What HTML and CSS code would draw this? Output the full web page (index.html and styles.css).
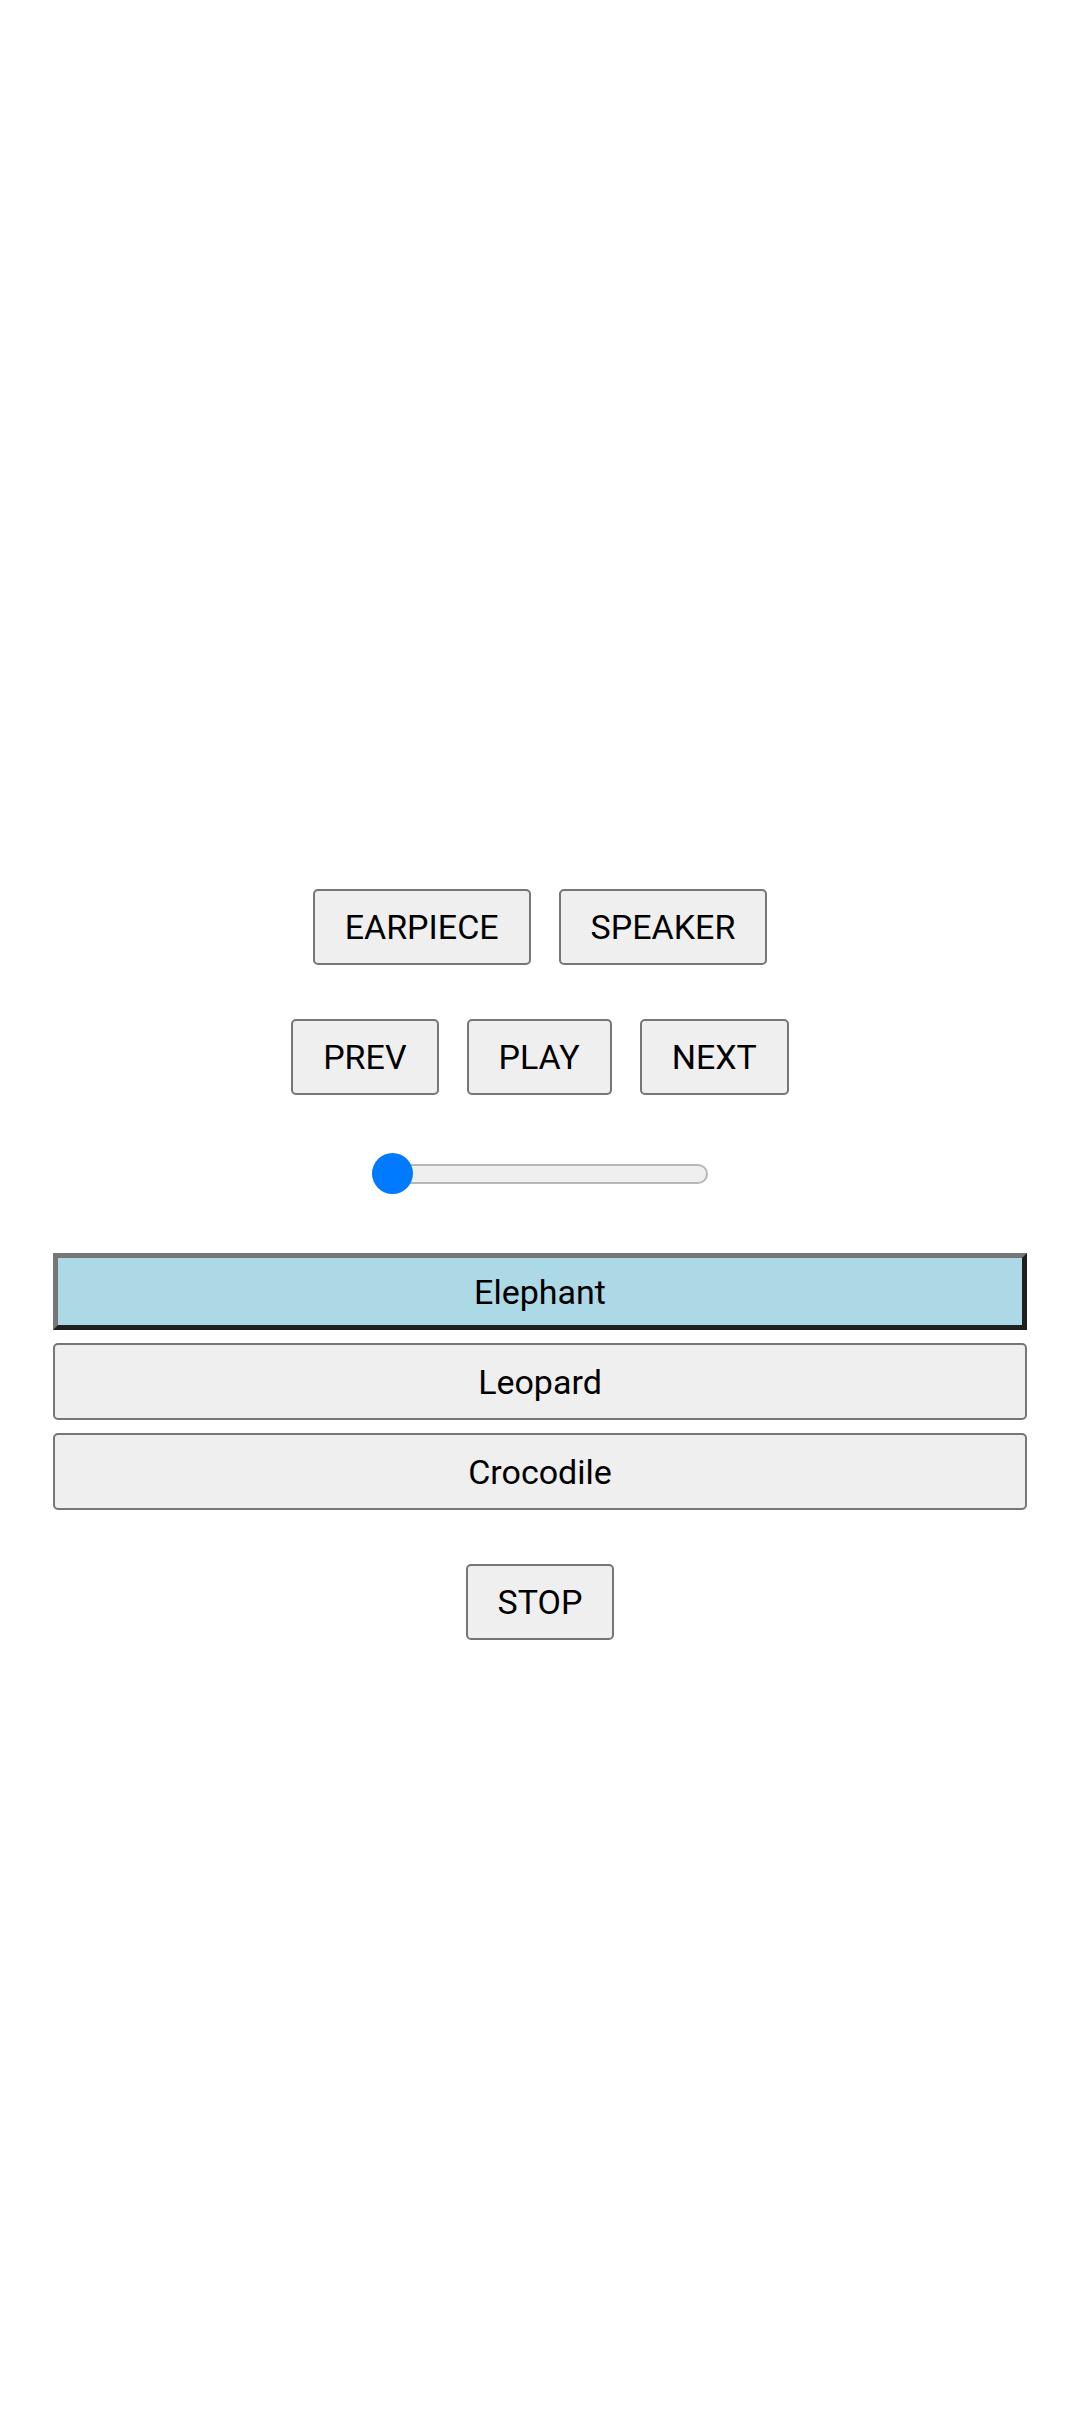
FILE: index.html
```html
<!DOCTYPE html>
<html lang="en">
<head>
<meta charset="utf-8">
<title>Player</title>
<link rel="stylesheet" href="styles.css">
</head>
<body>
<main class="player">
  <div class="row">
    <button class="btn">EARPIECE</button>
    <button class="btn">SPEAKER</button>
  </div>
  <div class="row row-transport">
    <button class="btn">PREV</button>
    <button class="btn">PLAY</button>
    <button class="btn">NEXT</button>
  </div>
  <div class="slider-wrap">
    <input class="slider" type="range" min="0" max="100" value="0">
  </div>
  <ul class="tracks">
    <li><button class="track selected">Elephant</button></li>
    <li><button class="track">Leopard</button></li>
    <li><button class="track">Crocodile</button></li>
  </ul>
  <div class="row row-stop">
    <button class="btn">STOP</button>
  </div>
</main>
</body>
</html>
```
FILE: styles.css
```css
html, body {
  margin: 0;
  padding: 0;
  background: #ffffff;
}

body {
  font-family: Roboto, "Noto Sans", sans-serif;
  color: #000000;
}

.player {
  display: flex;
  flex-direction: column;
  align-items: center;
  padding-top: 889px;
}

.row {
  display: flex;
  justify-content: center;
  gap: 28px;
}

.row-transport {
  margin-top: 54px;
}

.btn {
  box-sizing: border-box;
  height: 76px;
  padding: 0 30px;
  font-family: Roboto, "Noto Sans", sans-serif;
  font-size: 34px;
  color: #000000;
  background: #efefef;
  border: 2.6px solid #767676;
  border-radius: 5px;
}

.slider-wrap {
  margin-top: 58px;
  height: 41px;
  display: flex;
  align-items: center;
}

.slider {
  -webkit-appearance: none;
  appearance: none;
  width: 336px;
  height: 41px;
  margin: 0;
  background: transparent;
}

.slider::-webkit-slider-runnable-track {
  box-sizing: border-box;
  height: 20px;
  background: #efefef;
  border: 2px solid #b8b8b8;
  border-radius: 10px;
}

.slider::-webkit-slider-thumb {
  -webkit-appearance: none;
  appearance: none;
  width: 41px;
  height: 41px;
  margin-top: -12.5px;
  margin-left: -2px;
  border: none;
  border-radius: 50%;
  background: #007aff;
}

.tracks {
  list-style: none;
  margin: 59px 0 0;
  padding: 0 53px;
  width: 100%;
  box-sizing: border-box;
  display: flex;
  flex-direction: column;
  gap: 13px;
}

.track {
  box-sizing: border-box;
  display: block;
  width: 100%;
  height: 77px;
  padding: 0;
  font-family: Roboto, "Noto Sans", sans-serif;
  font-size: 34px;
  color: #000000;
  background: #efefef;
  border: 2.6px solid #767676;
  border-radius: 5px;
}

.track.selected {
  background: #add8e6;
  border: 5px solid;
  border-color: #767676 #202020 #202020 #767676;
  border-radius: 0;
}

.row-stop {
  margin-top: 54px;
}
```
